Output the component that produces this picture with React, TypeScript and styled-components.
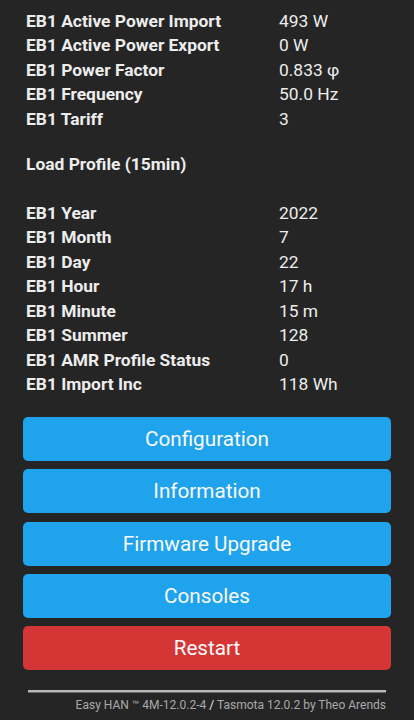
import React from "react";
import styled, { createGlobalStyle } from "styled-components";

const Global = createGlobalStyle`
  html, body { margin: 0; padding: 0; background: #252525; }
  body { font-family: Roboto, "Noto Sans", "Liberation Sans", sans-serif; color: #eaeaea; }
`;

const Page = styled.div`
  width: 414px;
  min-height: 720px;
  box-sizing: border-box;
  padding: 8.75px 23px 0 23px;
  background: #252525;
`;

const Table = styled.div`
  display: flex;
  flex-direction: column;
  padding-left: 3px;
`;

const Row = styled.div`
  display: grid;
  grid-template-columns: 253px 1fr;
  height: 24.5px;
  align-items: center;
  font-size: 17.4px;
  line-height: 24.5px;
`;

const Label = styled.div`
  font-weight: 700;
  color: #ededed;
  white-space: nowrap;
`;

const Value = styled.div`
  font-weight: 400;
  color: #ededed;
  white-space: nowrap;
`;

const Spacer = styled.div<{ $h: number }>`
  height: ${(p) => p.$h}px;
`;

const Heading = styled.div`
  font-size: 17.4px;
  font-weight: 700;
  height: 24.5px;
  line-height: 24.5px;
  color: #ededed;
`;

const Buttons = styled.div`
  display: flex;
  flex-direction: column;
  gap: 8.4px;
  margin-top: 20px;
`;

const Button = styled.button<{ $danger?: boolean }>`
  height: 44px;
  width: 100%;
  border: 0;
  border-radius: 5px;
  background: ${(p) => (p.$danger ? "#d43535" : "#1fa3ec")};
  color: #fafafa;
  font-family: Roboto, "Noto Sans", "Liberation Sans", sans-serif;
  font-size: 20.7px;
  font-weight: 400;
  padding: 0;
  cursor: pointer;
`;

const Footer = styled.div`
  margin-top: 20px;
  text-align: right;
  font-size: 12px;
  color: #aaa;
  padding: 0 5px;
`;

const Rule = styled.div`
  height: 2px;
  background: #b8b8b8;
  border-bottom: 1px solid #6a6a6a;
  margin-bottom: 5px;
`;

const Link = styled.span`
  color: #aaa;
`;

const Slash = styled.span`
  color: #eaeaea;
`;

const top: [string, string][] = [
  ["EB1 Active Power Import", "493 W"],
  ["EB1 Active Power Export", "0 W"],
  ["EB1 Power Factor", "0.833 φ"],
  ["EB1 Frequency", "50.0 Hz"],
  ["EB1 Tariff", "3"],
];

const profile: [string, string][] = [
  ["EB1 Year", "2022"],
  ["EB1 Month", "7"],
  ["EB1 Day", "22"],
  ["EB1 Hour", "17 h"],
  ["EB1 Minute", "15 m"],
  ["EB1 Summer", "128"],
  ["EB1 AMR Profile Status", "0"],
  ["EB1 Import Inc", "118 Wh"],
];

export default function App() {
  return (
    <>
      <Global />
      <Page>
        <Table>
          {top.map(([l, v]) => (
            <Row key={l}>
              <Label>{l}</Label>
              <Value>{v}</Value>
            </Row>
          ))}
          <Spacer $h={20.5} />
          <Heading>Load Profile (15min)</Heading>
          <Spacer $h={24.5} />
          {profile.map(([l, v]) => (
            <Row key={l}>
              <Label>{l}</Label>
              <Value>{v}</Value>
            </Row>
          ))}
        </Table>
        <Buttons>
          <Button>Configuration</Button>
          <Button>Information</Button>
          <Button>Firmware Upgrade</Button>
          <Button>Consoles</Button>
          <Button $danger>Restart</Button>
        </Buttons>
        <Footer>
          <Rule />
          <Link>Easy HAN ™ 4M-12.0.2-4</Link> <Slash>/</Slash>{" "}
          <Link>Tasmota 12.0.2 by Theo Arends</Link>
        </Footer>
      </Page>
    </>
  );
}
